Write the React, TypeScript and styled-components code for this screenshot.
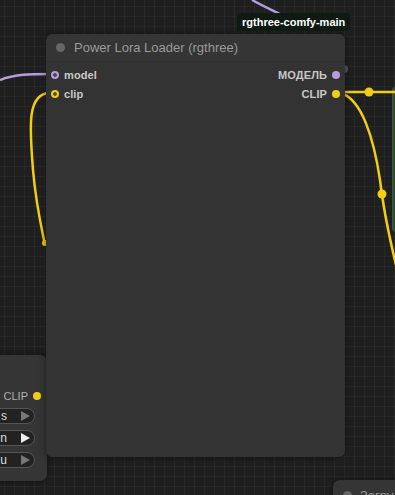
import * as React from "react";
import styled, { createGlobalStyle } from "styled-components";

const GlobalStyle = createGlobalStyle`
  html, body {
    margin: 0;
    padding: 0;
    background: #202020;
    font-family: "Liberation Sans", Arial, sans-serif;
  }
`;

const Canvas = styled.div`
  position: relative;
  width: 395px;
  height: 495px;
  overflow: hidden;
  background-color: #1f1f1f;
  background-image: linear-gradient(rgba(255, 255, 255, 0.035) 1px, transparent 1px),
    linear-gradient(90deg, rgba(255, 255, 255, 0.035) 1px, transparent 1px);
  background-size: 10px 10px;
  background-position: 4px 6px;
`;

const Wires = styled.svg`
  position: absolute;
  left: 0;
  top: 0;
  pointer-events: none;
`;

const Node = styled.div<{ $x: number; $y: number; $w: number; $h: number }>`
  position: absolute;
  left: ${(p) => p.$x}px;
  top: ${(p) => p.$y}px;
  width: ${(p) => p.$w}px;
  height: ${(p) => p.$h}px;
  background: #353535;
  border-radius: 7px;
  box-shadow: 0 0 6px rgba(0, 0, 0, 0.5);
  display: flex;
  flex-direction: column;
  overflow: hidden;
`;

const TitleBar = styled.div`
  height: 27px;
  flex: 0 0 27px;
  display: flex;
  align-items: center;
  gap: 9px;
  padding: 0 0 0 10px;
  background: #353535;
  border-bottom: 1px solid #2e2e2e;
  color: #9a9a9a;
  font-size: 13px;
`;

const TitleDot = styled.span`
  width: 9px;
  height: 9px;
  border-radius: 50%;
  background: #666;
`;

const Body = styled.div`
  flex: 1;
  display: flex;
  flex-direction: column;
  gap: 5px;
  padding: 6px 0 0;
  background: #333333;
`;

const SlotRow = styled.div`
  display: flex;
  justify-content: space-between;
  align-items: center;
  height: 14px;
`;

const Slot = styled.div<{ $out?: boolean }>`
  display: flex;
  align-items: center;
  flex-direction: ${(p) => (p.$out ? "row-reverse" : "row")};
  gap: 5px;
  padding: ${(p) => (p.$out ? "0 5px 0 0" : "0 0 0 5px")};
  color: #c8c8c8;
  font-size: 11px;
  font-weight: bold;
  letter-spacing: 0.1px;
`;

const Dot = styled.span<{ $color: string; $hollow?: boolean }>`
  width: 8px;
  height: 8px;
  box-sizing: border-box;
  border-radius: 50%;
  background: ${(p) => p.$color};
  border: ${(p) => (p.$hollow ? `2px solid ${p.$color}` : "none")};
  box-shadow: ${(p) => (p.$hollow ? "inset 0 0 0 1.5px #353535" : "none")};
`;

const Badge = styled.div`
  position: absolute;
  left: 237px;
  top: 13px;
  height: 18px;
  padding: 0 5px;
  display: flex;
  align-items: center;
  background: #0e1a12;
  border-radius: 3px;
  color: #fff;
  font-size: 11px;
  font-weight: bold;
`;

const SideBody = styled.div`
  flex: 1;
  display: flex;
  flex-direction: column;
  align-items: flex-end;
  padding: 35px 12px 0 0;
  gap: 6px;
`;

const OutRow = styled.div`
  display: flex;
  align-items: center;
  gap: 5px;
  margin-right: -6px;
  color: #b0b0b0;
  font-size: 11px;
`;

const Pill = styled.div<{ $bright?: boolean }>`
  width: 62px;
  height: 16px;
  border-radius: 8px;
  border: 1px solid #555;
  background: #222;
  display: flex;
  align-items: center;
  justify-content: flex-end;
  gap: 14px;
  padding: 0 4px 0 0;
  color: #ddd;
  font-size: 12px;
  box-sizing: border-box;
  &::after {
    content: "";
    width: 0;
    height: 0;
    border-top: 5px solid transparent;
    border-bottom: 5px solid transparent;
    border-left: 9px solid ${(p) => (p.$bright ? "#eee" : "#777")};
  }
`;

const Wires1 = () => (
  <Wires width={395} height={495}>
    <path d="M252 0 C 270 10, 290 18, 310 30" stroke="#b39ddb" strokeWidth={2.5} fill="none" />
    <path d="M0 80 C 15 74, 30 74, 50 74" stroke="#b39ddb" strokeWidth={2.5} fill="none" />
    <path d="M50 93 C 26 93, 30 130, 33 170 C 36 205, 42 230, 45 245" stroke="#f2cd16" strokeWidth={2.5} fill="none" />
    <circle cx={45} cy={243} r={3} fill="#f2cd16" />
    <path d="M340 92 L 395 92" stroke="#f2cd16" strokeWidth={2.5} fill="none" />
    <circle cx={369} cy={92} r={4.5} fill="#f2cd16" />
    <path d="M340 93 C 362 98, 374 140, 380 180 C 384 215, 390 240, 396 265" stroke="#f2cd16" strokeWidth={2.5} fill="none" />
    <circle cx={382} cy={194} r={4.5} fill="#f2cd16" />
    <circle cx={344} cy={69} r={4} fill="#555" />
  </Wires>
);

const GreenEdge = styled.div`
  position: absolute;
  left: 392px;
  top: 87px;
  width: 10px;
  height: 145px;
  background: #2f4a2f;
  border-left: 1px solid #3c5e3c;
  border-radius: 4px;
`;

const BottomTitle = styled.div`
  display: flex;
  align-items: center;
  gap: 8px;
  padding: 8px 0 0 10px;
  color: #999;
  font-size: 13px;
`;

export default function App() {
  return (
    <Canvas>
      <GlobalStyle />
      <GreenEdge />
      <Wires1 />
      <Node $x={-20} $y={355} $w={67} $h={126}>
        <SideBody>
          <OutRow>
            CLIP <Dot $color="#f2cd16" />
          </OutRow>
          <Pill>s</Pill>
          <Pill $bright>n</Pill>
          <Pill>u</Pill>
        </SideBody>
      </Node>
      <Node $x={46} $y={34} $w={299} $h={423}>
        <TitleBar>
          <TitleDot />
          Power Lora Loader (rgthree)
        </TitleBar>
        <Body>
          <SlotRow>
            <Slot>
              <Dot $color="#b39ddb" $hollow />
              model
            </Slot>
            <Slot $out>
              <Dot $color="#b39ddb" />
              МОДЕЛЬ
            </Slot>
          </SlotRow>
          <SlotRow>
            <Slot>
              <Dot $color="#f2cd16" $hollow />
              clip
            </Slot>
            <Slot $out>
              <Dot $color="#f2cd16" />
              CLIP
            </Slot>
          </SlotRow>
        </Body>
      </Node>
      <Badge>rgthree-comfy-main</Badge>
      <Node $x={333} $y={480} $w={80} $h={40}>
        <BottomTitle>
          <TitleDot />
          Загру
        </BottomTitle>
      </Node>
    </Canvas>
  );
}
